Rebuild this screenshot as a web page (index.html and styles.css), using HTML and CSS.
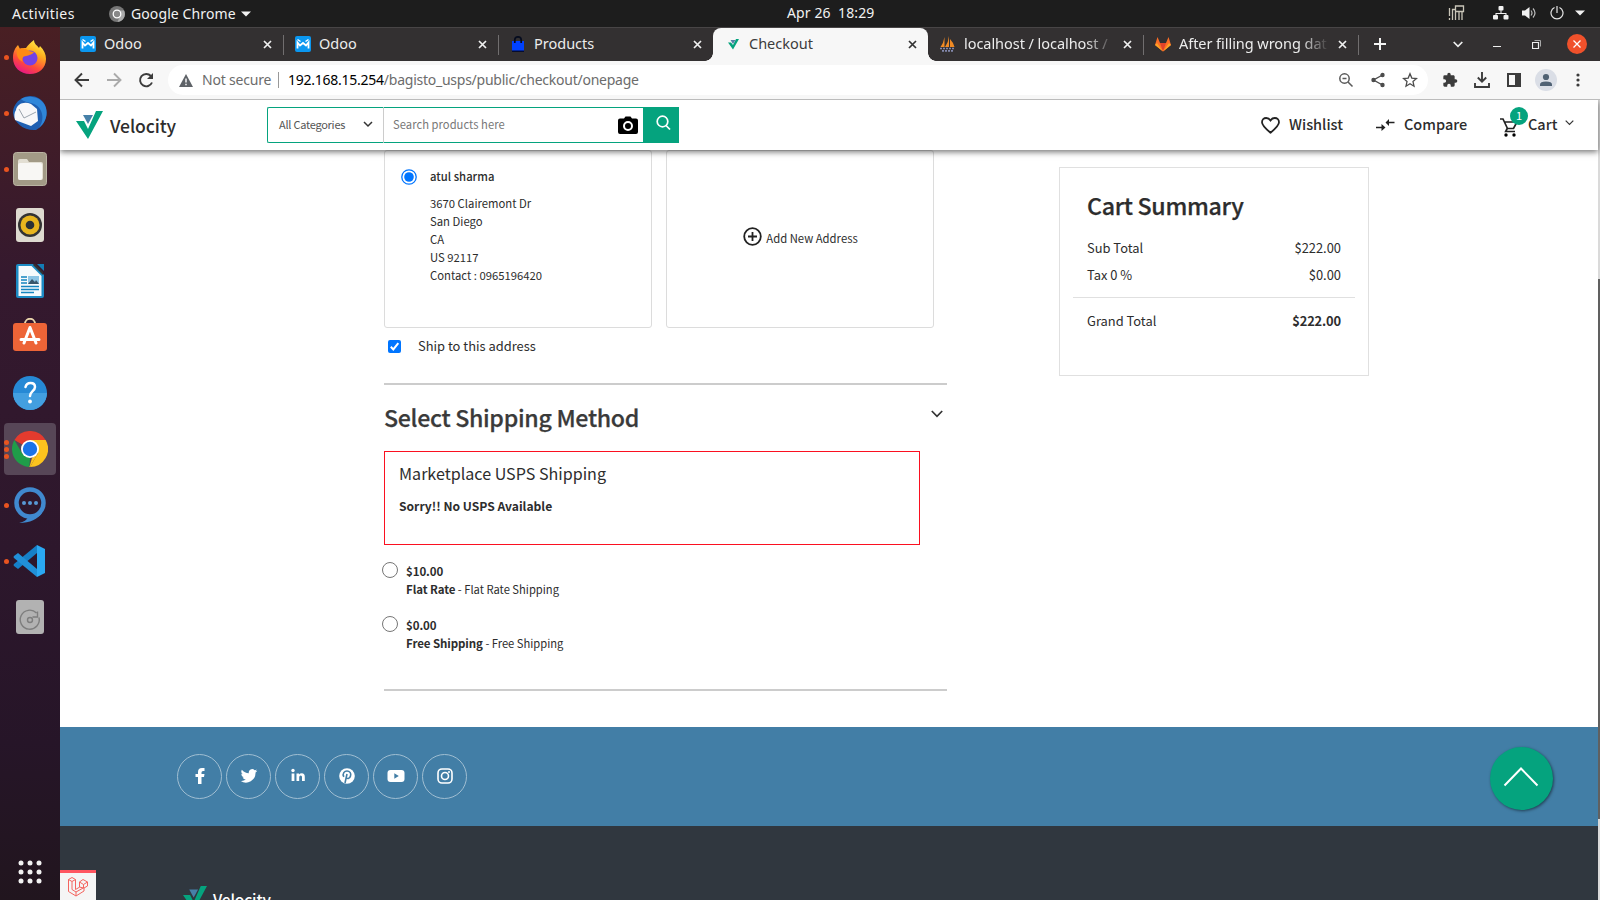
FILE: index.html
```html
<!DOCTYPE html>
<html lang="en">
<head>
<meta charset="utf-8">
<title>Checkout</title>
<link rel="stylesheet" href="styles.css">
</head>
<body>
<div class="desktop">
  <header class="topbar">
    <span class="activities">Activities</span>
    <span class="appmenu">
      <svg width="16" height="16" viewBox="0 0 16 16"><circle cx="8" cy="8" r="8" fill="#777"/><path d="M8 4.400H15A8 8 0 0 1 8.500 16L11 10z" fill="#aaa"/><circle cx="8" cy="8" r="3.800" fill="#888" stroke="#fff" stroke-width="1.300"/></svg>
      <span class="appname">Google Chrome</span>
      <svg width="10" height="6" viewBox="0 0 10 6"><path d="M0 .5h10L5 5.500z" fill="#f2f2f2"/></svg>
    </span>
    <span class="clock">Apr 26&nbsp; 18:29</span>
    <span class="tray">
      <svg class="t1" width="17" height="16" viewBox="0 0 17 16" fill="none" stroke="#c9c5b8" stroke-width="1.300"><path d="M1.500 3v8M1.500 13v2M4.500 15V4.500h3M7.500 1h8v5.500h-8zM7.500 6.500V15M11 6.500V15M14 6.500V15"/></svg>
      <svg class="t2" width="16" height="14" viewBox="0 0 16 14" fill="#f2f2f2"><rect x="5.500" width="5" height="4.500" rx="1"/><rect y="9" width="5" height="4.500" rx="1"/><rect x="10.500" y="9" width="5" height="4.500" rx="1"/><path d="M7.500 4h1v3h5v3h-1V8h-9v2h-1V7h5z"/></svg>
      <svg class="t3" width="15" height="14" viewBox="0 0 15 14"><path d="M0 4.500h3L7.500 1v12L3 9.500H0z" fill="#f2f2f2"/><path d="M9 4.500q2 2.500 0 5M11 2.500q4 4.500 0 9" fill="none" stroke="#bbb" stroke-width="1.200"/></svg>
      <svg class="t4" width="14" height="14" viewBox="0 0 14 14" fill="none" stroke="#e6e6e6" stroke-width="1.200"><path d="M4.500 1.500a6 6 0 1 0 5 0M7 0v7"/></svg>
      <svg width="10" height="6" viewBox="0 0 10 6"><path d="M0 .5h10L5 5.500z" fill="#f2f2f2"/></svg>
    </span>
  </header>

  <aside class="dock">
    <div class="app"><i class="dots"><b></b></i>
      <svg width="36" height="36" viewBox="0 0 36 36"><defs><linearGradient id="ff" x1=".8" y1="0" x2=".3" y2="1"><stop offset="0" stop-color="#fff44f"/><stop offset=".35" stop-color="#ffb01f"/><stop offset=".7" stop-color="#ff4b3a"/><stop offset="1" stop-color="#e6148a"/></linearGradient></defs><path d="M18 35C8 35 1 28 1 19c0-6 2-10 5-13l2 4c2-1 4-1 6-1 2-3 5-6 8-8 0 4 3 5 5 8l1-2c4 4 6 8 6 13 0 9-7 15-16 15z" fill="url(#ff)"/><circle cx="18" cy="19" r="7.500" fill="#7542e5"/><path d="M5 11c4-3 9-2 12 1l5 1c-2 3-5 3-8 4-3 0-5 3-3 6-5-2-7-7-6-12z" fill="#ff8a16"/></svg></div>
    <div class="app"><i class="dots"><b></b></i>
      <svg width="36" height="36" viewBox="0 0 36 36"><path d="M9 4C16-1 28 0 33 10c4 10 0 20-9 25C12 36 2 28 1 18 1 12 4 7 9 4z" fill="#1e5fb2"/><path d="M9 4C17-1 31 2 34 13c2 8-1 15-7 20 6-9 4-20-5-24-6-2-10-2-13-5z" fill="#2f86d9"/><path d="M4 15C5 9 12 6 19 9l6 5 1 12-7 5-16-6c-1-4-1-7 1-10z" fill="#f7f7f9"/><path d="M7 14l5 9 12-6" fill="none" stroke="#9aa3ad" stroke-width="1"/></svg></div>
    <div class="app"><i class="dots"><b></b></i>
      <svg width="34" height="34" viewBox="0 0 34 34"><rect x=".5" y=".5" width="33" height="33" rx="3" fill="#a29a86" stroke="#bab4a3"/><path d="M5 9q0-2 2-2h7l2 3h12q2 0 2 2v14q0 2-2 2H7q-2 0-2-2z" fill="#e3dfd3"/><rect x="5" y="11" width="24" height="17" rx="2" fill="#f8f7f4"/></svg></div>
    <div class="app">
      <svg width="28" height="34" viewBox="0 0 28 34"><rect width="28" height="34" rx="3" fill="#dedad0"/><circle cx="14" cy="17" r="12" fill="#333"/><circle cx="14" cy="17" r="9.500" fill="#e8b51e"/><circle cx="14" cy="17" r="4.300" fill="#2b3136"/></svg></div>
    <div class="app">
      <svg width="28" height="34" viewBox="0 0 28 34"><path d="M2 0h15l11 11v21q0 2-2 2H2q-2 0-2-2V2q0-2 2-2z" fill="#1c8bc4"/><path d="M2.500 2h13L25.500 12v20h-23z" fill="#f6fafc"/><path d="M21 0h7v7z" fill="#137cb5"/><path d="M17 1l10 10v-3L19 0z" fill="#333"/><path d="M5 13h6M5 16h6M5 19h6M5 22.500h18M5 25.500h18M5 28.500h13" stroke="#1585bf" stroke-width="1.600"/><rect x="12" y="12" width="11" height="8" fill="#8dc5e5"/><path d="M12 20l4-5 3 3 1-2 3 4z" fill="#38566b"/></svg></div>
    <div class="app">
      <svg class="store" width="34" height="34" viewBox="0 0 34 34"><path d="M12 6C12-1 22-1 22 6" fill="none" stroke="#e9d6ac" stroke-width="1.800"/><rect y="5" width="34" height="28" rx="3" fill="#ed6437"/><path d="M17 9.500L11 25M17 9.500L23 25M8 21.500h18" fill="none" stroke="#fff" stroke-width="3" stroke-linecap="round"/></svg></div>
    <div class="app">
      <svg width="34" height="34" viewBox="0 0 34 34"><circle cx="17" cy="17" r="17" fill="#2689d5"/><path d="M0 17a17 17 0 0 0 34 0z" fill="#439fe0"/><path d="M12.500 11q1-4 5-4 4.500 0 4.500 4c0 4-5 4.500-5 9" fill="none" stroke="#fff" stroke-width="2.500" stroke-linecap="round"/><circle cx="17" cy="25.500" r="1.900" fill="#fff"/></svg></div>
    <div class="app current"><i class="dots"><b></b><b></b><b></b></i>
      <svg width="36" height="36" viewBox="0 0 36 36"><path d="M18 18L2.400 9A18 18 0 0 1 33.600 9z" fill="#e33b2e"/><path d="M18 9h15.600A18 18 0 0 1 18 36l7.800-13.500z" fill="#fcc31e"/><path d="M2.400 9l7.800 13.500L18 27l-.6 9A18 18 0 0 1 2.400 9z" fill="#1f9d49"/><path d="M25.800 22.500L18 36h-.6L20 27z" fill="#fcc31e"/><circle cx="18" cy="18" r="9" fill="#fff"/><circle cx="18" cy="18" r="7.200" fill="#1a73e8"/></svg></div>
    <div class="app"><i class="dots"><b></b></i>
      <svg width="34" height="36" viewBox="0 0 34 36"><path d="M17 2.500a13.500 13.500 0 1 1 0 27 13.500 13.500 0 0 1 0-27z" fill="none" stroke="#4089cf" stroke-width="4.500"/><path d="M21 28l8-2c-4 6-12 10-23 10 5-1 8-3 9-6z" fill="#4089cf"/><g fill="#5899d5"><circle cx="11" cy="16" r="2"/><circle cx="17" cy="16" r="2"/><circle cx="23" cy="16" r="2"/></g></svg></div>
    <div class="app"><i class="dots"><b></b></i>
      <svg width="34" height="34" viewBox="0 0 34 34"><path d="M24 1l8 4v24l-8 4z" fill="#2aa8f2"/><path d="M24 1v8L5 25l-4-3q-1-1 0-2z" fill="#1680c8"/><path d="M24 33v-8L5 9l-4 3q-1 1 0 2z" fill="#2190d8"/></svg></div>
    <div class="app">
      <svg width="28" height="34" viewBox="0 0 28 34"><rect width="28" height="34" rx="3" fill="#b2b2b2"/><path d="M20.500 13a9.500 9.500 0 1 0 2.500 4.500M21.500 11.500v5.500h-5" fill="none" stroke="#7e7e7e" stroke-width="1.400"/><circle cx="14" cy="20" r="2.500" fill="none" stroke="#7e7e7e" stroke-width="1.400"/></svg></div>
    <div class="launcher"><svg width="24" height="24" viewBox="0 0 24 24" fill="#f2f2f2"><circle cx="3" cy="3" r="2.500"/><circle cx="12" cy="3" r="2.500"/><circle cx="21" cy="3" r="2.500"/><circle cx="3" cy="12" r="2.500"/><circle cx="12" cy="12" r="2.500"/><circle cx="21" cy="12" r="2.500"/><circle cx="3" cy="21" r="2.500"/><circle cx="12" cy="21" r="2.500"/><circle cx="21" cy="21" r="2.500"/></svg></div>
  </aside>

  <section class="browser">
    <nav class="tabs">
      <div class="tab"><svg class="fav" width="16" height="16" viewBox="0 0 16 16"><rect width="16" height="16" rx="2" fill="#0b97f0"/><path d="M2.500 3.500l3 2M13.500 3.500l-3 2" stroke="#fff" stroke-width="1.500"/><path d="M2.500 12.500V6.500L5 9.500 8 7l3 2.500 2.500-3v6" fill="none" stroke="#fff" stroke-width="1.800"/></svg><span class="title">Odoo</span><svg class="x" width="9" height="9" viewBox="0 0 9 9"><path d="M1 1l7 7M8 1L1 8"/></svg></div>
      <div class="tab line"><svg class="fav" width="16" height="16" viewBox="0 0 16 16"><rect width="16" height="16" rx="2" fill="#0b97f0"/><path d="M2.500 3.500l3 2M13.500 3.500l-3 2" stroke="#fff" stroke-width="1.500"/><path d="M2.500 12.500V6.500L5 9.500 8 7l3 2.500 2.500-3v6" fill="none" stroke="#fff" stroke-width="1.800"/></svg><span class="title">Odoo</span><svg class="x" width="9" height="9" viewBox="0 0 9 9"><path d="M1 1l7 7M8 1L1 8"/></svg></div>
      <div class="tab line"><svg class="fav" width="16" height="16" viewBox="0 0 16 16"><path d="M2 5h12v10H2z" fill="#0041ff"/><path d="M4.800 7V4a3.200 3.200 0 0 1 6.400 0v3" fill="none" stroke="#060c1f" stroke-width="1.700"/><path d="M2 14.500h12V16H2z" fill="#060c2f"/></svg><span class="title">Products</span><svg class="x" width="9" height="9" viewBox="0 0 9 9"><path d="M1 1l7 7M8 1L1 8"/></svg></div>
      <div class="tab active"><svg class="fav" width="16" height="16" viewBox="0 0 16 16"><path d="M3 6.500h3l2 2.500 3-6h3L8 13.500z" fill="#05a37e"/><path d="M5.500 4h5L8 8z" fill="#5480a6"/></svg><span class="title">Checkout</span><svg class="x" width="9" height="9" viewBox="0 0 9 9"><path d="M1 1l7 7M8 1L1 8"/></svg></div>
      <div class="tab"><svg class="fav" width="16" height="16" viewBox="0 0 16 16"><path d="M4.500 1v10H.5q3-4 4-10zM9 0v11H5q3.500-5 4-11zM10 3q3 3 4.500 8H10z" fill="#f08a24"/><path d="M0 12.500h15M2 14.800h12" stroke="#8388ad" stroke-width="1.700" stroke-dasharray="2 1"/></svg><span class="title fade">localhost / localhost /</span><svg class="x" width="9" height="9" viewBox="0 0 9 9"><path d="M1 1l7 7M8 1L1 8"/></svg></div>
      <div class="tab line"><svg class="fav" width="16" height="16" viewBox="0 0 16 16"><path d="M0 9l2.500-8 2.500 6h6l2.500-6L16 9l-8 6.500z" fill="#fc6d26"/><path d="M5 7h6l-3 8.500z" fill="#e24329"/><path d="M0 9l2-2 6 8.500zM16 9l-2-2-6 8.500z" fill="#fca326"/></svg><span class="title fade">After filling wrong dat</span><svg class="x" width="9" height="9" viewBox="0 0 9 9"><path d="M1 1l7 7M8 1L1 8"/></svg></div>
      <div class="controls line">
        <svg class="plus" width="12" height="12" viewBox="0 0 12 12"><path d="M6 0v12M0 6h12" stroke="#f4f4f4" stroke-width="2"/></svg>
        <svg class="down" width="10" height="7" viewBox="0 0 10 7"><path d="M.7 1L5 5.300 9.300 1" fill="none" stroke="#eee" stroke-width="1.700"/></svg>
        <i class="min"></i>
        <svg class="restore" width="9" height="9" viewBox="0 0 9 9" fill="none" stroke="#eee"><path d="M.5 2.500h6v6h-6z" stroke-width="1.200"/><path d="M2.500.5h6v6" stroke="#aaa"/></svg>
        <svg class="quit" width="20" height="20" viewBox="0 0 20 20"><circle cx="10" cy="10" r="10" fill="#f0512b"/><path d="M6.500 6.500l7 7m0-7l-7 7" stroke="#fff" stroke-width="1.300"/></svg>
      </div>
    </nav>

    <div class="toolbar">
      <svg class="nav" width="16" height="16" viewBox="0 0 16 16"><path d="M15 8H2M8 1.500L1.500 8 8 14.500" fill="none" stroke="#3c3c3c" stroke-width="1.900"/></svg>
      <svg class="nav" width="16" height="16" viewBox="0 0 16 16"><path d="M1 8h13M8 1.500L14.500 8 8 14.500" fill="none" stroke="#aaa" stroke-width="1.900"/></svg>
      <svg class="nav" width="16" height="16" viewBox="0 0 16 16"><path d="M14 10.500A6.200 6.200 0 1 1 12.900 4" fill="none" stroke="#3c3c3c" stroke-width="1.900"/><path d="M15 1v6H9z" fill="#3c3c3c"/></svg>
      <div class="omnibox">
        <svg width="14" height="13" viewBox="0 0 14 13"><path d="M7 0l7 13H0z" fill="#5f6368"/><path d="M7 4.500v4M7 9.700v1.500" stroke="#fff" stroke-width="1.400"/></svg>
        <span class="insecure">Not secure</span>
        <span class="url"><em>192.168.15.254</em>/bagisto_usps/public/checkout/onepage</span>
        <span class="omni-icons">
          <svg width="16" height="16" viewBox="0 0 16 16" fill="none" stroke="#5a5a5a" stroke-width="1.500"><circle cx="6.500" cy="6.500" r="4.700"/><path d="M10 10l4.500 4.500M4.500 6.500h4"/></svg>
          <svg width="16" height="16" viewBox="0 0 16 16" fill="#4c4c4c" stroke="#4c4c4c" stroke-width="1.400"><path d="M12.500 3L3.500 8l9 5" fill="none"/><circle cx="12.500" cy="3" r="1.500"/><circle cx="3.500" cy="8" r="1.500"/><circle cx="12.500" cy="13" r="1.500"/></svg>
          <svg width="16" height="16" viewBox="0 0 16 16" fill="none" stroke="#4c4c4c" stroke-width="1.300"><path d="M8 1.800l1.800 4.300 4.700.4L11 9.600l1 4.600-4-2.500-4 2.500 1-4.600-3.500-3.100 4.700-.4z"/></svg>
        </span>
      </div>
      <svg class="ext" width="16" height="16" viewBox="0 0 24 24"><path d="M20.500 11H19V7c0-1.100-.9-2-2-2h-4V3.500a2.500 2.500 0 0 0-5 0V5H4a2 2 0 0 0-2 2v3.800h1.500a2.700 2.700 0 0 1 0 5.400H2V20c0 1.100.9 2 2 2h3.800v-1.500a2.700 2.700 0 0 1 5.400 0V22H17a2 2 0 0 0 2-2v-4h1.500a2.500 2.500 0 0 0 0-5z" fill="#3c3c3c"/></svg>
      <svg class="ext" width="16" height="16" viewBox="0 0 16 16"><path d="M8 0v9M3.800 5.500L8 9.700l4.200-4.200M1 11v4h14v-4" fill="none" stroke="#3c3c3c" stroke-width="1.900"/></svg>
      <svg class="ext" width="16" height="16" viewBox="0 0 16 16"><path d="M2 2h12v12H2z" fill="none" stroke="#3c3c3c" stroke-width="2"/><path d="M9 2h5v12H9z" fill="#3c3c3c"/></svg>
      <svg class="avatar" width="22" height="22" viewBox="0 0 22 22"><circle cx="11" cy="11" r="11" fill="#dadee6"/><circle cx="11" cy="8" r="3.100" fill="#4f6173"/><path d="M5 17v-1.500q0-3 6-3t6 3V17z" fill="#4f6173"/></svg>
      <svg class="more" width="4" height="14" viewBox="0 0 4 14" fill="#3c3c3c"><circle cx="2" cy="2" r="1.600"/><circle cx="2" cy="7" r="1.600"/><circle cx="2" cy="12" r="1.600"/></svg>
    </div>

    <main class="page">
      <header class="site-header">
        <svg class="mark" width="27" height="28" viewBox="0 0 27 28"><path d="M0 10h8l4 8L20 0h7L12 28z" fill="#05a37e"/><path d="M7 4h10l-5 9z" fill="#4680a8"/></svg>
        <span class="brand">Velocity</span>
        <div class="search">
          <span class="cats"><span>All Categories</span><svg width="10" height="7" viewBox="0 0 10 7"><path d="M1 1l4 4 4-4" fill="none" stroke="#333" stroke-width="1.500"/></svg></span>
          <span class="query"><span>Search products here</span><svg width="20" height="18" viewBox="0 0 20 18"><path d="M2 2.500h4L7.500.5h5l1.500 2h4q2 0 2 2V16q0 2-2 2H2q-2 0-2-2V4.500q0-2 2-2z"/><circle cx="10" cy="10" r="4" fill="none" stroke="#fff" stroke-width="2"/></svg></span>
          <span class="go"><svg width="15" height="16" viewBox="0 0 15 16" fill="none" stroke="#fff" stroke-width="1.700"><circle cx="6.500" cy="6.500" r="5.300"/><path d="M10 10.500l4 4"/></svg></span>
        </div>
        <div class="links">
          <svg class="heart" width="19" height="17" viewBox="0 0 19 17"><path d="M9.500 15.700C2 9.500 1 7.500 1 5.200 1 2.800 2.800 1 5.200 1 7 1 8.500 1.900 9.500 3.400 10.500 1.900 12 1 13.800 1 16.200 1 18 2.800 18 5.200c0 2.300-1 4.300-8.500 10.500z" fill="none" stroke="#222" stroke-width="1.800"/></svg>
          <span class="wish">Wishlist</span>
          <svg class="cmp" width="19" height="12" viewBox="0 0 19 12"><path d="M0 8.500h7M18.500 3.500H11" stroke="#222" stroke-width="1.600"/><path d="M5.500 5v7L9.500 8.500zM13 0v7L9.500 3.500z" fill="#222"/></svg>
          <span class="comp">Compare</span>
          <span class="cartbox"><svg width="18" height="19" viewBox="0 0 18 19"><path d="M0 1h3l4.500 9.500h6L17 4M4 4h13M7.500 10L5.700 13.500H15" fill="none" stroke="#222" stroke-width="1.700"/><circle cx="6" cy="17" r="1.700"/><circle cx="14" cy="17" r="1.700"/></svg><b class="badge">1</b></span>
          <span class="cart">Cart</span>
          <svg class="cv" width="9" height="6" viewBox="0 0 9 6"><path d="M.7.7l3.800 3.800L8.300.7" fill="none" stroke="#333" stroke-width="1.200"/></svg>
        </div>
      </header>

      <div class="content">
        <div class="checkout">
          <div class="addresses">
            <div class="card saved">
              <svg width="16" height="16" viewBox="0 0 16 16"><circle cx="8" cy="8" r="7.200" fill="#fff" stroke="#0075ff" stroke-width="1.300"/><circle cx="8" cy="8" r="4.800" fill="#0075ff"/></svg>
              <div>
                <p class="name">atul sharma</p>
                <p class="addr">3670 Clairemont Dr<br>San Diego<br>CA<br>US 92117<br>Contact : 0965196420</p>
              </div>
            </div>
            <div class="card new"><svg width="19" height="19" viewBox="0 0 19 19" fill="none" stroke="#222"><circle cx="9.500" cy="9.500" r="8.300" stroke-width="1.800"/><path d="M9.500 5v9M5 9.500h9" stroke-width="1.800"/></svg><span>Add New Address</span></div>
          </div>
          <div class="ship"><svg width="13" height="13" viewBox="0 0 13 13"><rect width="13" height="13" rx="2" fill="#0075ff"/><path d="M2.800 6.800l2.500 2.600 5-6.200" fill="none" stroke="#fff" stroke-width="2"/></svg><span>Ship to this address</span></div>
          <div class="method">
            <div class="method-head"><h2>Select Shipping Method</h2><svg width="12" height="8" viewBox="0 0 12 8"><path d="M.8 1L6 6.300 11.200 1" fill="none" stroke="#333" stroke-width="1.700"/></svg></div>
            <div class="alert"><h3>Marketplace USPS Shipping</h3><p>Sorry!! No USPS Available</p></div>
            <div class="option"><i></i><div><b class="price">$10.00</b><p><b>Flat Rate</b> <span>- Flat Rate Shipping</span></p></div></div>
            <div class="option"><i></i><div><b class="price">$0.00</b><p><b>Free Shipping</b> <span>- Free Shipping</span></p></div></div>
          </div>
        </div>
        <section class="summary">
          <h2>Cart Summary</h2>
          <div class="row"><span>Sub Total</span><span>$222.00</span></div>
          <div class="row"><span>Tax 0 %</span><span>$0.00</span></div>
          <div class="row total"><span>Grand Total</span><b>$222.00</b></div>
        </section>
      </div>

      <div class="social">
        <a><svg width="18" height="18" viewBox="0 0 18 18"><path d="M7 17V10H4.500V7H7V5q0-4 4-4h2.500v3H12q-1.500 0-1.500 1.500V7h3L13 10h-2.500v7z"/></svg></a>
        <a><svg width="18" height="18" viewBox="0 0 24 24"><path d="M23 5a9 9 0 0 1-2.600.7 4.500 4.500 0 0 0 2-2.500 9 9 0 0 1-2.900 1.100 4.500 4.500 0 0 0-7.700 4.100A12.800 12.800 0 0 1 2.500 3.700a4.500 4.500 0 0 0 1.400 6 4.500 4.500 0 0 1-2-.6 4.500 4.500 0 0 0 3.600 4.500 4.500 4.500 0 0 1-2 .1 4.500 4.500 0 0 0 4.200 3.100A9 9 0 0 1 1 18.700 12.800 12.800 0 0 0 20.700 7.300 9 9 0 0 0 23 5z"/></svg></a>
        <a><svg width="18" height="18" viewBox="0 0 18 18"><circle cx="4" cy="3.500" r="1.700"/><path d="M2.600 6.500h2.800V14H2.600zM7.500 6.500h2.600v1q1-1.300 2.700-1.300 3 0 3 3.600V14H13v-4q0-1.500-1.300-1.500-1.500 0-1.500 1.700V14H7.500z"/></svg></a>
        <a><svg width="18" height="18" viewBox="0 0 18 18"><circle cx="9" cy="9" r="7.800"/><path d="M7 16l2-9M5.800 9.800C4 6.500 6.500 4 9 4s4.500 2 3.500 5c-.8 3-3.500 3-4.200 1.500" fill="none" stroke="#427ea6" stroke-width="1.600"/></svg></a>
        <a><svg width="18" height="18" viewBox="0 0 18 18"><rect x=".5" y="3" width="17" height="12" rx="3"/><path d="M7.300 6.300v5.400L11.800 9z" fill="#427ea6"/></svg></a>
        <a><svg width="18" height="18" viewBox="0 0 18 18"><rect x="2" y="2" width="14" height="14" rx="4" fill="none" stroke="#fff" stroke-width="1.600"/><circle cx="9" cy="9" r="3.500" fill="none" stroke="#fff" stroke-width="1.600"/><circle cx="13" cy="5" r="1"/></svg></a>
        <button class="top"><svg width="36" height="20" viewBox="0 0 36 20"><path d="M1.500 18.500L18 1.500l16.500 17" fill="none" stroke="#fff" stroke-width="2"/></svg></button>
      </div>
      <footer class="footer">
        <div class="debug"><svg width="20" height="20" viewBox="0 0 20 20" fill="none" stroke="#f4645f" stroke-width="1"><path d="M.5 2.500L4 .5l3.500 2v10l4-2.300V5L15 2.500 19.500 5v4L16 11v3l-8 5-7.500-4.500zM.5 2.500L4 4.500l3.500-2M4 4.500v8l4 2.500 8-4.500M8 15v4M11.500 5l4 2.500 4-2.500M15.500 7.500V11M11.500 10l4 1"/></svg></div>
        <svg class="mark" width="24" height="25" viewBox="0 0 27 28"><path d="M0 10h8l4 8L20 0h7L12 28z" fill="#05a37e"/><path d="M7 4h10l-5 9z" fill="#4680a8"/></svg>
        <span class="brand">Velocity</span>
      </footer>
      <div class="scrollbar"><i></i></div>
    </main>
  </section>
</div>
</body>
</html>
```
FILE: styles.css
```css
* { box-sizing: border-box; margin: 0; padding: 0; }
body { width: 1600px; height: 900px; overflow: hidden; }
svg { display: block; flex: none; }
.desktop {
  width: 1600px; height: 900px;
  display: grid; grid-template: 27px 873px / 60px 1540px;
  font-family: "Noto Sans", sans-serif;
}

/* System bar */
.topbar {
  grid-column: 1 / 3; display: grid; grid-template-columns: 787px 669px 144px;
  grid-template-rows: 27px;
  grid-template-areas: "left clock tray";
  align-items: center; background: #1d1d1d; color: #f2f2f2; font-size: 14px;
}
.activities { grid-area: left; padding-left: 12px; letter-spacing: .45px; }
.appmenu { grid-area: left; display: flex; align-items: center; margin-left: 109px; }
.appname { width: 105px; margin: 0 5px 0 6px; white-space: nowrap; letter-spacing: .1px; }
.clock { grid-area: clock; white-space: nowrap; padding-bottom: 2px; letter-spacing: .1px; }
.tray { grid-area: tray; display: flex; align-items: center; margin-left: -8px; padding-bottom: 1px; }
.t1 { margin-right: 28px; }
.t2 { margin-right: 13px; }
.t3 { margin-right: 13px; }
.t4 { margin-right: 11px; }

/* Dock */
.dock {
  display: flex; flex-direction: column; padding-top: 2px;
  background: linear-gradient(#491f23 0, #35192e 28%, #2d172c 60%, #261528 82%, #21151e 100%);
}
.app { position: relative; height: 52px; width: 52px; margin: 2px 4px; display: flex; align-items: center; justify-content: center; border-radius: 4px; flex: none; }
.current { background: #574657; }
.store { margin-top: -4px; }
.dots { position: absolute; left: 0; top: 0; height: 52px; display: flex; flex-direction: column; justify-content: center; gap: 2px; }
.dots b { width: 5px; height: 5px; border-radius: 50%; background: #e95420; }
.launcher { margin: auto 0 16px 18px; }

/* Tab strip */
.browser { display: grid; grid-template-rows: 34px 39px 800px; background: #fff; min-width: 0; }
.tabs { display: flex; background: #333031; border-top: 1px solid #484546; padding-left: 8px; color: #ececec; }
.tab { width: 215px; height: 33px; display: flex; align-items: center; padding: 0 0 1px 12px; font-size: 14.500px; position: relative; flex: none; }
.title { width: 155px; margin: 0 4px 0 8px; padding-bottom: 2px; white-space: nowrap; }
.fade { width: 152px; margin-right: 7px; letter-spacing: -.05px; -webkit-mask-image: linear-gradient(90deg, #000 80%, transparent 99%); mask-image: linear-gradient(90deg, #000 80%, transparent 99%); }
.x path { stroke: #f0f0f0; stroke-width: 1.700; }
.line { background: linear-gradient(#716e6f, #716e6f) no-repeat 0 7px / 1px 20px; }
.active { background: #f7f7f7; color: #3c3c3c; border-radius: 8px 8px 0 0; }
.active::before, .active::after {
  content: ""; position: absolute; bottom: 0; width: 8px; height: 8px;
  background: radial-gradient(circle at 0 0, transparent 7.500px, #f7f7f7 8px);
}
.active::before { left: -8px; }
.active::after { right: -8px; transform: scaleX(-1); }
.active .x path { stroke: #333; }
.controls { display: flex; align-items: center; flex: 1; padding: 0 0 1px 16px; }
.plus { margin-right: 67px; }
.down { margin-right: 30px; }
.min { width: 8px; height: 1px; background: #eee; margin: 5px 31px 0 0; }
.restore { margin-right: 26px; }

/* Toolbar */
.toolbar { display: flex; align-items: center; background: #f7f7f7; border-bottom: 1px solid #bcbcbc; padding-left: 14px; }
.nav { margin-right: 16px; }
.omnibox { width: 1260px; height: 30px; border-radius: 15px; background: #fff; display: flex; align-items: center; padding: 0 10px 0 11px; margin-left: -2px; font-size: 14px; color: #6c6c6c; }
.insecure { width: 77px; margin: 0 9px; border-right: 1px solid #999; line-height: 16px; white-space: nowrap; letter-spacing: -.2px; }
.url { letter-spacing: -.25px; white-space: nowrap; padding-bottom: 1px; }
.url em { font-style: normal; color: #000; }
.omni-icons { display: flex; gap: 16px; margin-left: auto; }
.ext { margin-left: 16px; }
.omnibox + .ext { margin-left: 14px; }
.avatar { margin-left: 13px; }
.more { margin-left: 19px; }

/* Shop page */
.page {
  position: relative; display: grid; grid-template-rows: 50px 577px 99px 74px;
  font-family: "Noto Sans CJK SC", "Noto Sans", sans-serif; color: #2d2d2d; overflow: hidden; height: 800px;
}
.site-header { position: relative; z-index: 2; display: flex; width: 1538px; height: 50px; background: #fff; box-shadow: 0 2px 6px rgba(0,0,0,.55); padding: 7px 0 0 16px; }
.mark { margin-top: 4px; }
.brand { width: 164px; padding-left: 7px; font-weight: 500; font-size: 17.600px; letter-spacing: -.1px; line-height: 37px; }
.search { display: grid; grid-template-columns: 117px 260px 35px; width: 412px; height: 36px; font-size: 11.200px; color: #555; }
.cats, .query { border: 1px solid #05a37e; display: flex; align-items: center; justify-content: space-between; padding: 0 10px 0 11px; border-radius: 2px 0 0 2px; }
.cats > span, .query > span { padding-bottom: 2px; }
.cats > span { font-size: 11px; letter-spacing: -.25px; }
.cats svg { margin-top: -2px; }
.cats { border-right-color: #ccc; }
.query { border-left: 0; padding: 0 5px 0 9px; color: #777; border-radius: 0; letter-spacing: .05px; }
.go { background: #05a37e; padding: 8px 0 0 12px; }
.links { display: flex; flex: 1; align-items: center; height: 36px; padding-left: 582px; font-size: 14.500px; font-weight: 500; white-space: nowrap; }
.wish, .comp, .cart { padding-bottom: 4px; }
.wish { width: 54px; margin: 0 33px 0 9px; }
.comp { width: 62px; margin: 0 34px 0 9px; }
.cartbox { position: relative; margin-top: 5px; }
.badge { position: absolute; left: 10px; top: -11.500px; width: 18px; height: 18px; border-radius: 50%; background: #05a37e; color: #fff; font-size: 11px; line-height: 17px; text-align: center; font-weight: 400; }
.cart { width: 30px; margin: 0 7px 0 10px; }
.cv { margin-top: -4px; }

.content { display: flex; padding-left: 324px; }
.checkout { width: 563px; }
.addresses { display: flex; gap: 14px; }
.card { width: 268px; height: 178px; border: 1px solid #dcdcdc; border-radius: 3px; font-size: 11.300px; }
.saved { display: flex; padding: 17px 0 0 16px; }
.saved > svg { margin-top: 1px; }
.saved > div { padding-left: 13px; }
.name { font-weight: 500; line-height: 17px; }
.addr { line-height: 18px; padding-top: 9px; }
.new { display: flex; align-items: center; justify-content: center; gap: 4px; padding: 0 0 6px 1px; }
.new span { padding-top: 3px; }
.ship { display: flex; align-items: center; height: 36px; padding-left: 4px; gap: 17px; font-size: 12.900px; }
.ship span { padding-bottom: 2px; }
.method { margin-top: 19px; height: 308px; border: solid #ccc; border-width: 2px 0; }
.method-head { display: flex; justify-content: space-between; height: 66px; padding: 12px 4px 0 0; }
.method-head h2, .summary h2 { font-size: 23.200px; line-height: 40px; font-weight: 500; color: #3a3a3a; letter-spacing: -.32px; -webkit-text-stroke: .25px; }
.method-head svg { margin-top: 13px; }
.alert { width: 536px; height: 94px; border: 1px solid #fb1020; padding: 7px 14px; }
.alert h3 { font-size: 16.100px; line-height: 29px; font-weight: 400; }
.alert p { font-size: 12.100px; line-height: 20px; font-weight: 700; margin-top: 8px; }
.option { display: flex; height: 54px; padding-top: 17px; margin-left: -2px; line-height: 18px; font-size: 11.200px; }
.option i { width: 16px; height: 16px; border: 1px solid #767676; border-radius: 50%; flex: none; }
.option > div { padding-left: 8px; }
.option b { font-size: 11.500px; letter-spacing: -.08px; }
.price { display: block; height: 18px; }

.summary { width: 310px; height: 209px; border: 1px solid #e0e0e0; margin: 17px 0 0 112px; padding: 17px 13px 0; font-size: 12.900px; }
.summary h2 { padding-left: 14px; color: #2d2d2d; }
.row { display: flex; justify-content: space-between; line-height: 27px; padding: 0 14px; }
.summary h2 + .row { margin-top: 9px; }
.total { margin-top: 9px; border-top: 1px solid #e0e0e0; padding-top: 9px; }
.total b { font-weight: 700; letter-spacing: -.15px; }

/* Footer */
.social { display: flex; gap: 4px; align-items: center; background: #427ea6; padding-left: 117px; width: 1538px; }
.social a { width: 45px; height: 45px; border: 1px solid #a0bed2; border-radius: 50%; display: flex; align-items: center; justify-content: center; fill: #fff; }
.social a svg { margin-top: -2px; }
.top { width: 63px; height: 63px; border: 0; border-radius: 50%; background: #05a37e; box-shadow: 1px 1px 3px rgba(0,0,0,.5); display: flex; align-items: center; justify-content: center; margin: 4px 45px 0 auto; }
.top svg { margin: -3px 0 0 -2px; }
.footer { display: flex; background: #30373f; width: 1538px; color: #fff; overflow: hidden; height: 74px; }
.debug { width: 36px; height: 30px; margin: 44px 87px 0 0; background: #f5f5f5; border-top: 3px solid #ff5661; padding: 4px 0 0 8px; flex: none; }
.footer .mark { margin-top: 60px; }
.footer .brand { font-size: 15.500px; letter-spacing: -.15px; line-height: 24px; padding: 61px 0 0 6px; }
.scrollbar { position: absolute; right: 0; top: 0; width: 2px; height: 800px; background: #dadada; padding-top: 179px; }
.scrollbar i { display: block; height: 540px; background: #606060; }
```
